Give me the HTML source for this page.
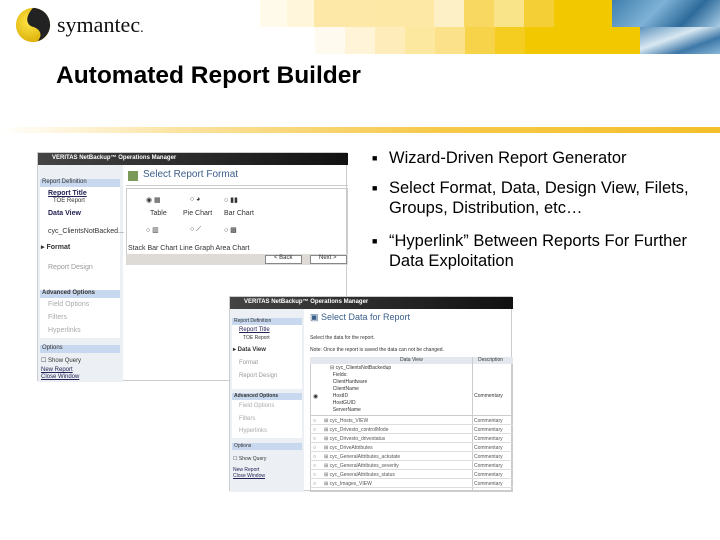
<!DOCTYPE html>
<html><head><meta charset="utf-8"><style>
*{margin:0;padding:0;box-sizing:border-box}
body{width:720px;height:540px;background:#fff;position:relative;overflow:hidden;font-family:"Liberation Sans",Arial,sans-serif}
.a{position:absolute}
.b{position:absolute;height:27px}
.t{font-size:7px;color:#333;position:absolute;white-space:nowrap}
.bul{position:absolute;left:372px;font-size:16.5px;color:#000;line-height:20px}
.bul span{position:absolute;left:0;font-size:9px;top:0}
.bul div{margin-left:17px}
.r{position:absolute;left:80px;width:203px;height:9px;border-bottom:1px solid #ddd;font-size:5px;color:#555;white-space:nowrap}
.r i{position:absolute;font-style:normal;top:2px}
</style></head><body>
<!-- logo -->
<svg class="a" style="left:14px;top:6px" width="38" height="38" viewBox="0 0 40 40">
<defs><radialGradient id="y" cx=".4" cy=".4" r=".7"><stop offset="0" stop-color="#ffe84a"/><stop offset="1" stop-color="#d9a800"/></radialGradient></defs>
<circle cx="20" cy="20" r="18" fill="url(#y)"/>
<path d="M20 2 A18 18 0 0 1 38 20 A18 18 0 0 1 25 37 C31 30 27 24 20 22 C13 20 11 12 20 2Z" fill="#222"/>
</svg>
<div class="a" style="left:57px;top:12px;font-family:'Liberation Serif',serif;font-size:22px;color:#111">symantec<span style="font-size:14px">.</span></div>
<!-- mosaic -->
<div class="b" style="left:260px;top:0;width:27px;background:#fffaea"></div>
<div class="b" style="left:287px;top:0;width:27px;background:#fff6dc"></div>
<div class="b" style="left:314px;top:0;width:60px;background:#fde8a8"></div>
<div class="b" style="left:374px;top:0;width:60px;background:#fde9a5"></div>
<div class="b" style="left:434px;top:0;width:30px;background:#fdf0c6"></div>
<div class="b" style="left:464px;top:0;width:30px;background:#f8d860"></div>
<div class="b" style="left:494px;top:0;width:30px;background:#fae48a"></div>
<div class="b" style="left:524px;top:0;width:30px;background:#f4cf36"></div>
<div class="b" style="left:554px;top:0;width:60px;background:#f2c800"></div>
<div class="b" style="left:315px;top:27px;width:30px;background:#fffaf0"></div>
<div class="b" style="left:345px;top:27px;width:30px;background:#fff4d8"></div>
<div class="b" style="left:375px;top:27px;width:30px;background:#feedba"></div>
<div class="b" style="left:405px;top:27px;width:30px;background:#fde8a0"></div>
<div class="b" style="left:435px;top:27px;width:30px;background:#fae18a"></div>
<div class="b" style="left:465px;top:27px;width:30px;background:#f6d348"></div>
<div class="b" style="left:495px;top:27px;width:30px;background:#f4cd20"></div>
<div class="b" style="left:525px;top:27px;width:120px;background:#f2c800"></div>
<div class="a" style="left:612px;top:0;width:108px;height:27px;background:linear-gradient(135deg,#3f7fae,#7fb2d6 40%,#2d6a9a 70%,#a9cde6)"></div>
<div class="a" style="left:640px;top:27px;width:80px;height:27px;background:linear-gradient(160deg,#5d93bd,#d9e8f2 40%,#3d78a8 70%,#8ab7d8)"></div>
<!-- title -->
<div class="a" style="left:56px;top:62px;font-size:24.5px;font-weight:bold;color:#000">Automated Report Builder</div>
<div class="a" style="left:0;top:127px;width:720px;height:6px;background:linear-gradient(90deg,#fff 0%,#fbe3a0 25%,#f6c94a 60%,#f3bf2a 100%)"></div>
<!-- bullets -->
<div class="bul" style="top:148px"><span>■</span><div>Wizard-Driven Report Generator</div></div>
<div class="bul" style="top:178px"><span>■</span><div>Select Format, Data, Design View, Filets,<br>Groups, Distribution, etc…</div></div>
<div class="bul" style="top:231px"><span>■</span><div>“Hyperlink” Between Reports For Further<br>Data Exploitation</div></div>
<!-- screenshot 1 -->
<div class="a" style="left:37px;top:152px;width:310px;height:229px;background:#fff;border:1px solid #ccc">
 <div class="a" style="left:0;top:0;width:310px;height:12px;background:linear-gradient(90deg,#444,#111)"><span class="t" style="color:#fff;left:14px;top:2px;font-size:6px;font-weight:bold">VERITAS NetBackup™ Operations Manager</span></div>
 <div class="a" style="left:0;top:12px;width:85px;height:217px;background:#eceff3">
  <div class="a" style="left:2px;top:14px;width:80px;height:8px;background:#c8d8ee"></div><span class="t" style="left:4px;top:14px;font-size:6px">Report Definition</span>
  <div class="a" style="left:2px;top:22px;width:80px;height:116px;background:#fff"></div>
  <span class="t" style="left:10px;top:25px;color:#225;font-weight:bold;text-decoration:underline">Report Title</span>
  <span class="t" style="left:15px;top:33px;font-size:6px">TOE Report</span>
  <span class="t" style="left:10px;top:45px;color:#225;font-weight:bold">Data View</span>
  <span class="t" style="left:10px;top:63px">cyc_ClientsNotBacked...</span>
  <span class="t" style="left:3px;top:78px;font-weight:bold">▸ Format</span>
  <span class="t" style="left:10px;top:99px;color:#999">Report Design</span>
  <div class="a" style="left:2px;top:125px;width:80px;height:8px;background:#c8d8ee"></div><span class="t" style="left:4px;top:125px;font-size:6px;font-weight:bold">Advanced Options</span>
  <div class="a" style="left:2px;top:133px;width:80px;height:40px;background:#fff"></div>
  <span class="t" style="left:10px;top:136px;color:#aaa">Field Options</span>
  <span class="t" style="left:10px;top:149px;color:#aaa">Filters</span>
  <span class="t" style="left:10px;top:162px;color:#aaa">Hyperlinks</span>
  <div class="a" style="left:2px;top:180px;width:80px;height:8px;background:#c8d8ee"></div><span class="t" style="left:4px;top:180px;font-size:6px">Options</span>
  <span class="t" style="left:3px;top:192px;font-size:6px">☐ Show Query</span>
  <span class="t" style="left:3px;top:202px;font-size:6px;color:#225;text-decoration:underline">New Report</span>
  <span class="t" style="left:3px;top:209px;font-size:6px;color:#225;text-decoration:underline">Close Window</span>
 </div>
 <div class="a" style="left:90px;top:18px;width:10px;height:10px;background:#7a9a5a"></div>
 <span class="t" style="left:105px;top:16px;font-size:10px;color:#3a5e8a">Select Report Format</span>
 <div class="a" style="left:88px;top:32px;width:222px;height:1px;background:#ccc"></div>
 <div class="a" style="left:88px;top:35px;width:222px;height:74px;border:1px solid #ccc"></div>
 <span class="t" style="left:108px;top:43px">◉ ▦</span><span class="t" style="left:112px;top:57px">Table</span>
 <span class="t" style="left:152px;top:43px">○ ◕</span><span class="t" style="left:145px;top:57px">Pie Chart</span>
 <span class="t" style="left:186px;top:43px">○ ▮▮</span><span class="t" style="left:186px;top:57px">Bar Chart</span>
 <span class="t" style="left:108px;top:73px">○ ▥</span><span class="t" style="left:90px;top:92px">Stack Bar Chart Line Graph Area Chart</span>
 <span class="t" style="left:152px;top:73px">○ ⟋</span><span class="t" style="left:186px;top:73px">○ ▩</span>
 <div class="a" style="left:88px;top:101px;width:222px;height:11px;background:#dedbd6"></div>
 <div class="a" style="left:227px;top:102px;width:37px;height:9px;background:#fff;border:1px solid #888"></div><span class="t" style="left:236px;top:102px;font-size:6px">&lt; Back</span>
 <div class="a" style="left:272px;top:102px;width:37px;height:9px;background:#fff;border:1px solid #888"></div><span class="t" style="left:281px;top:102px;font-size:6px">Next &gt;</span>
</div>
<!-- screenshot 2 -->
<div class="a" style="left:229px;top:296px;width:283px;height:195px;background:#fff;border:1px solid #ccc">
 <div class="a" style="left:0;top:0;width:283px;height:12px;background:linear-gradient(90deg,#444,#111)"><span class="t" style="color:#fff;left:14px;top:2px;font-size:6px;font-weight:bold">VERITAS NetBackup™ Operations Manager</span></div>
 <div class="a" style="left:0;top:12px;width:74px;height:183px;background:#eceff3">
  <div class="a" style="left:2px;top:9px;width:70px;height:7px;background:#c8d8ee"></div><span class="t" style="left:4px;top:9px;font-size:5px">Report Definition</span>
  <div class="a" style="left:2px;top:16px;width:70px;height:64px;background:#fff"></div>
  <span class="t" style="left:9px;top:18px;font-size:6px;color:#225;text-decoration:underline">Report Title</span>
  <span class="t" style="left:13px;top:26px;font-size:5px">TOE Report</span>
  <span class="t" style="left:3px;top:37px;font-size:6px;font-weight:bold">▸ Data View</span>
  <span class="t" style="left:9px;top:51px;font-size:6px;color:#999">Format</span>
  <span class="t" style="left:9px;top:64px;font-size:6px;color:#999">Report Design</span>
  <div class="a" style="left:2px;top:84px;width:70px;height:7px;background:#c8d8ee"></div><span class="t" style="left:4px;top:84px;font-size:5px;font-weight:bold">Advanced Options</span>
  <div class="a" style="left:2px;top:91px;width:70px;height:38px;background:#fff"></div>
  <span class="t" style="left:9px;top:94px;font-size:6px;color:#aaa">Field Options</span>
  <span class="t" style="left:9px;top:107px;font-size:6px;color:#aaa">Filters</span>
  <span class="t" style="left:9px;top:119px;font-size:6px;color:#aaa">Hyperlinks</span>
  <div class="a" style="left:2px;top:134px;width:70px;height:7px;background:#c8d8ee"></div><span class="t" style="left:4px;top:134px;font-size:5px">Options</span>
  <span class="t" style="left:3px;top:147px;font-size:5px">☐ Show Query</span>
  <span class="t" style="left:3px;top:158px;font-size:5px;color:#225">New Report</span>
  <span class="t" style="left:3px;top:164px;font-size:5px;color:#225;text-decoration:underline">Close Window</span>
 </div>
 <span class="t" style="left:80px;top:15px;font-size:9px;color:#3a5e8a">▣ Select Data for Report</span>
 <span class="t" style="left:80px;top:38px;font-size:5px">Select the data for the report.</span>
 <span class="t" style="left:80px;top:50px;font-size:5px">Note: Once the report is saved the data can not be changed.</span>
 <div class="a" style="left:80px;top:60px;width:203px;height:135px;border:1px solid #ccc"></div>
 <div class="a" style="left:80px;top:60px;width:203px;height:7px;background:#e4e8ee"></div>
 <div class="a" style="left:242px;top:60px;width:1px;height:135px;background:#ccc"></div>
 <span class="t" style="left:170px;top:60px;font-size:5px">Data View</span><span class="t" style="left:248px;top:60px;font-size:5px">Description</span>
 <span class="t" style="left:100px;top:68px;font-size:5px;line-height:7px">⊟ cyc_ClientsNotBackedup<br>&nbsp;&nbsp;Fields:<br>&nbsp;&nbsp;ClientHardware<br>&nbsp;&nbsp;ClientName<br>&nbsp;&nbsp;HostID<br>&nbsp;&nbsp;HostGUID<br>&nbsp;&nbsp;ServerName</span>
 <span class="t" style="left:83px;top:96px;font-size:6px">◉</span><span class="t" style="left:240px;top:96px;font-size:5px">&nbsp;&nbsp;&nbsp;Commentary</span>
 <div class="a" style="left:80px;top:118px;width:203px;height:1px;background:#ccc"></div>
 <div class="r" style="top:119px"><i style="left:3px">○</i><i style="left:14px">⊞ cyc_Hosts_VIEW</i><i style="left:164px">Commentary</i></div>
 <div class="r" style="top:128px"><i style="left:3px">○</i><i style="left:14px">⊞ cyc_Drivesto_controlMode</i><i style="left:164px">Commentary</i></div>
 <div class="r" style="top:137px"><i style="left:3px">○</i><i style="left:14px">⊞ cyc_Drivesto_drivestatus</i><i style="left:164px">Commentary</i></div>
 <div class="r" style="top:146px"><i style="left:3px">○</i><i style="left:14px">⊞ cyc_DriveAttributes</i><i style="left:164px">Commentary</i></div>
 <div class="r" style="top:155px"><i style="left:3px">○</i><i style="left:14px">⊞ cyc_GeneralAttributes_ackstate</i><i style="left:164px">Commentary</i></div>
 <div class="r" style="top:164px"><i style="left:3px">○</i><i style="left:14px">⊞ cyc_GeneralAttributes_severity</i><i style="left:164px">Commentary</i></div>
 <div class="r" style="top:173px"><i style="left:3px">○</i><i style="left:14px">⊞ cyc_GeneralAttributes_status</i><i style="left:164px">Commentary</i></div>
 <div class="r" style="top:182px"><i style="left:3px">○</i><i style="left:14px">⊞ cyc_Images_VIEW</i><i style="left:164px">Commentary</i></div>
</div>
</body></html>
